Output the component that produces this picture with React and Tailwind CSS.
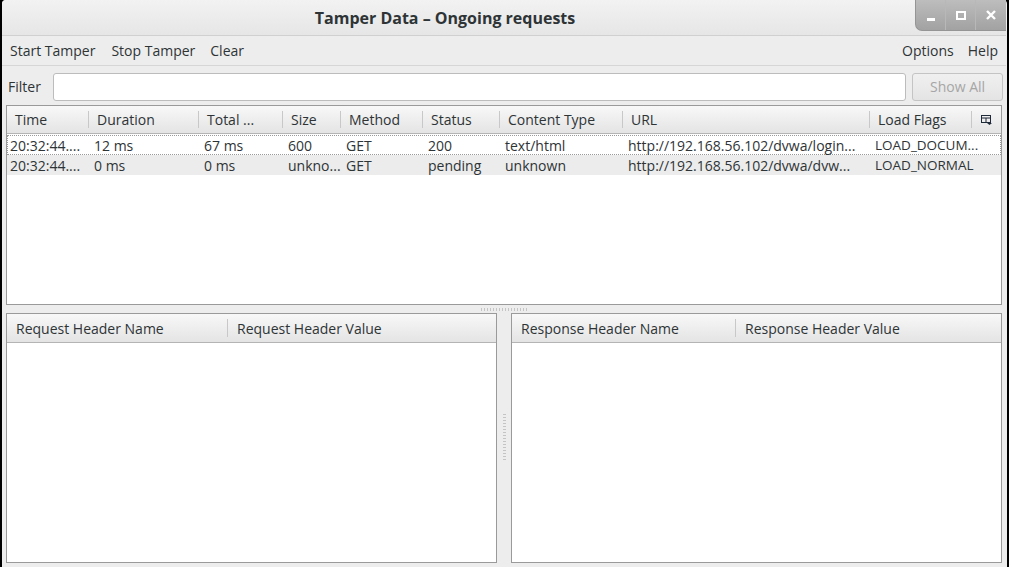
import React from "react";

const cols = [
  { name: "Time", w: "w-[82px]" },
  { name: "Duration", w: "w-[110px]" },
  { name: "Total ...", w: "w-[84px]" },
  { name: "Size", w: "w-[58px]" },
  { name: "Method", w: "w-[82px]" },
  { name: "Status", w: "w-[77px]" },
  { name: "Content Type", w: "w-[123px]" },
  { name: "URL", w: "w-[247px]" },
  { name: "Load Flags", w: "w-[102px]" },
];

const rows = [
  ["20:32:44....", "12 ms", "67 ms", "600", "GET", "200", "text/html", "http://192.168.56.102/dvwa/login...", "LOAD_DOCUM..."],
  ["20:32:44....", "0 ms", "0 ms", "unkno...", "GET", "pending", "unknown", "http://192.168.56.102/dvwa/dvw...", "LOAD_NORMAL"],
];

function ColPicker() {
  return (
    <svg width="11" height="10" viewBox="0 0 11 10" className="text-gray-800">
      <rect x="0.5" y="0.5" width="9" height="7" fill="none" stroke="currentColor" />
      <line x1="0.5" y1="3" x2="9.5" y2="3" stroke="currentColor" />
      <line x1="5" y1="3" x2="5" y2="7.5" stroke="currentColor" />
      <path d="M6 8h5l-2.5 2z" fill="currentColor" />
    </svg>
  );
}

function HeaderCell({ children, className = "", last }) {
  return (
    <div className={`h-full flex items-center shrink-0 relative ${className}`}>
      {children}
      {!last && <span className="absolute right-0 top-[5px] bottom-[5px] w-px bg-[#c8c8c8]" />}
    </div>
  );
}

function HeaderPanel({ left, right, leftW }) {
  return (
    <div className="flex-1 flex flex-col border border-[#9a9a9a] bg-white">
      <div className="h-[29px] flex bg-gradient-to-b from-[#f8f8f8] to-[#e4e4e4] border-b border-[#b4b4b4]">
        <HeaderCell className={`${leftW} pl-[9px]`}>{left}</HeaderCell>
        <HeaderCell className="flex-1 pl-[9px]" last>{right}</HeaderCell>
      </div>
      <div className="flex-1" />
    </div>
  );
}

export default function App() {
  return (
    <div className="w-[1009px] h-[567px] bg-black px-[2px] pt-0 text-[14px] text-[#2e3436] overflow-hidden" style={{ fontFamily: "'Open Sans', 'DejaVu Sans', sans-serif" }}>
      <div className="h-full flex flex-col bg-[#ededed] rounded-tl-[4px] rounded-tr-[4px] pr-[1px]">
        {/* title bar */}
        <div className="h-[36px] shrink-0 flex items-start relative bg-gradient-to-b from-[#f2f2f2] to-[#e6e6e6] border-b border-[#d0d0d0] rounded-t-[4px]">
          <div className="flex-1 h-full flex items-center justify-center text-[16px] font-bold text-[#2e3436] pr-[118px] pt-[1px]">
            Tamper Data – Ongoing requests
          </div>
          <div className="absolute right-0 top-0 h-[31px] w-[91px] flex rounded-bl-[7px] bg-gradient-to-b from-[#bdbdbd] to-[#a2a2a2] border-l border-b border-[#959595]">
            <div className="w-[30px] flex items-center justify-center border-r border-[#b8b8b8]">
              <span className="w-[8px] h-[3px] bg-white mt-[8px]" />
            </div>
            <div className="w-[30px] flex items-center justify-center border-r border-[#b8b8b8]">
              <span className="w-[10px] h-[9px] border-[2px] border-white" />
            </div>
            <div className="flex-1 flex items-center justify-center text-white">
              <svg width="12" height="12" viewBox="0 0 12 12">
                <path d="M2 2l8 8M10 2l-8 8" stroke="white" strokeWidth="2.4" />
              </svg>
            </div>
          </div>
        </div>

        {/* menu bar */}
        <div className="h-[30px] shrink-0 flex items-center px-[7px] border-b border-[#d6d6d6]">
          <span className="px-[1px]">Start Tamper</span>
          <span className="ml-[14px] px-[1px]">Stop Tamper</span>
          <span className="ml-[13px] px-[1px]">Clear</span>
          <span className="ml-auto px-[1px]">Options</span>
          <span className="ml-[12px] px-[1px]">Help</span>
        </div>

        {/* filter */}
        <div className="h-[37px] shrink-0 flex items-center pl-[6px] pr-[3px] pt-[4px]">
          <span className="w-[45px]">Filter</span>
          <div className="w-[854px] h-[28px] bg-white border border-[#bcbcbc] rounded-[3px]" />
          <div className="ml-[6px] w-[91px] h-[28px] flex items-center justify-center border border-[#c4c4c4] rounded-[3px] bg-gradient-to-b from-[#f0f0f0] to-[#e4e4e4] text-[#a6a6a6]">
            Show All
          </div>
        </div>

        {/* requests tree */}
        <div className="mx-[4px] mt-[2px] h-[200px] shrink-0 flex flex-col border border-[#9a9a9a] bg-white">
          <div className="h-[28px] shrink-0 flex bg-gradient-to-b from-[#f8f8f8] to-[#e4e4e4] border-b border-[#b4b4b4]">
            {cols.map((c) => (
              <HeaderCell key={c.name} className={`${c.w} pl-[8px]`}>{c.name}</HeaderCell>
            ))}
            <div className="flex-1 flex items-center justify-center">
              <ColPicker />
            </div>
          </div>
          <div className="pt-[1px]">
            {rows.map((r, i) => (
              <div key={i} className={`h-[20px] flex items-center ${i === 0 ? "bg-white border border-dotted border-[#9a9a9a]" : "bg-[#ececec] border border-transparent"}`}>
                {r.map((v, j) => (
                  <div
                    key={j}
                    className={`${j === 8 ? "flex-1 text-[13.5px]" : cols[j].w} shrink-0 ${j === 0 ? "pl-[2px]" : "pl-[4px]"} whitespace-nowrap overflow-hidden`}
                  >
                    {v}
                  </div>
                ))}
              </div>
            ))}
          </div>
        </div>

        {/* horizontal splitter */}
        <div className="h-[8px] shrink-0 flex items-center justify-center">
          <div className="w-[46px] h-[3px] bg-[repeating-linear-gradient(90deg,#c4c4c4_0_1px,transparent_1px_3px)]" />
        </div>

        {/* headers */}
        <div className="flex-1 flex mx-[4px] mb-[4px]">
          <HeaderPanel left="Request Header Name" right="Request Header Value" leftW="w-[221px]" />
          <div className="w-[14px] shrink-0 flex items-center justify-center">
            <div className="w-[3px] h-[46px] bg-[repeating-linear-gradient(180deg,#c4c4c4_0_1px,transparent_1px_3px)] mb-[2px]" />
          </div>
          <HeaderPanel left="Response Header Name" right="Response Header Value" leftW="w-[224px]" />
        </div>
      </div>
    </div>
  );
}
